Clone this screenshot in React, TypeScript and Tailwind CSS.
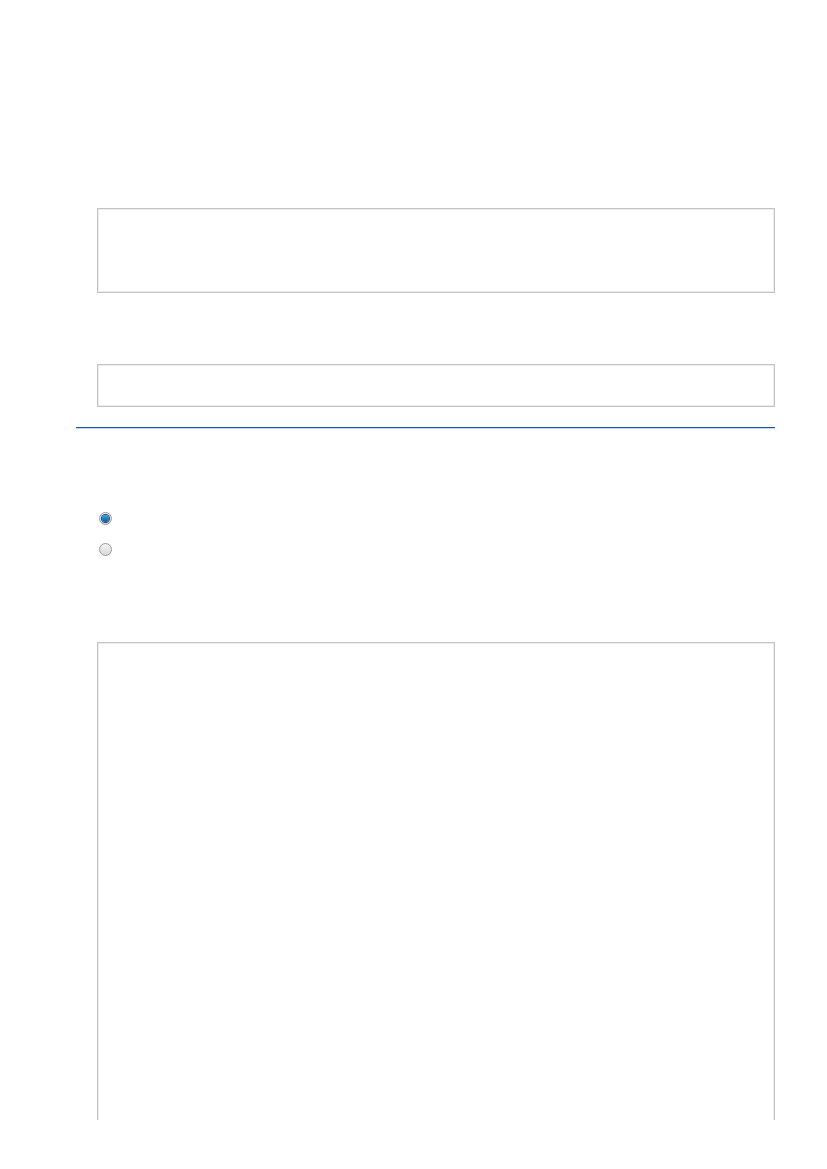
import React from 'react';

const Radio: React.FC<{ checked?: boolean }> = ({ checked }) => (
  <span className="flex h-[13px] w-[13px] items-center justify-center rounded-full border border-[#9a9a9a] bg-gradient-to-b from-[#f4f4f4] to-[#d8d8d8]">
    {checked && (
      <span className="h-[7px] w-[7px] rounded-full bg-gradient-to-b from-[#3aa0e0] to-[#0b5c9e] ring-1 ring-[#0a4a80]" />
    )}
  </span>
);

export default function App() {
  return (
    <div className="min-h-[1169px] bg-white" style={{ fontFamily: '"Liberation Sans", Arial, sans-serif' }}>
      <div className="pt-[208px] pl-[97px] pr-[52px]">
        <div className="h-[85px] border border-[#c4c4c4] shadow-[inset_0_0_0_1px_#ececec]" />
        <div className="mt-[71px] h-[43px] border border-[#c4c4c4] shadow-[inset_0_0_0_1px_#ececec]" />
      </div>

      <div className="mt-[20px] ml-[76px] mr-[52px] h-[2px] border-b border-[#c8d8ee] bg-[#1456a6]" />

      <div className="mt-[83px] pl-[99px] flex flex-col gap-[18px]">
        <Radio checked />
        <Radio />
      </div>

      <div className="mt-[86px] ml-[97px] mr-[52px] h-[478px] border-x border-t border-[#c4c4c4] shadow-[inset_1px_1px_0_0_#ececec,inset_-1px_0_0_0_#ececec]" />
    </div>
  );
}
